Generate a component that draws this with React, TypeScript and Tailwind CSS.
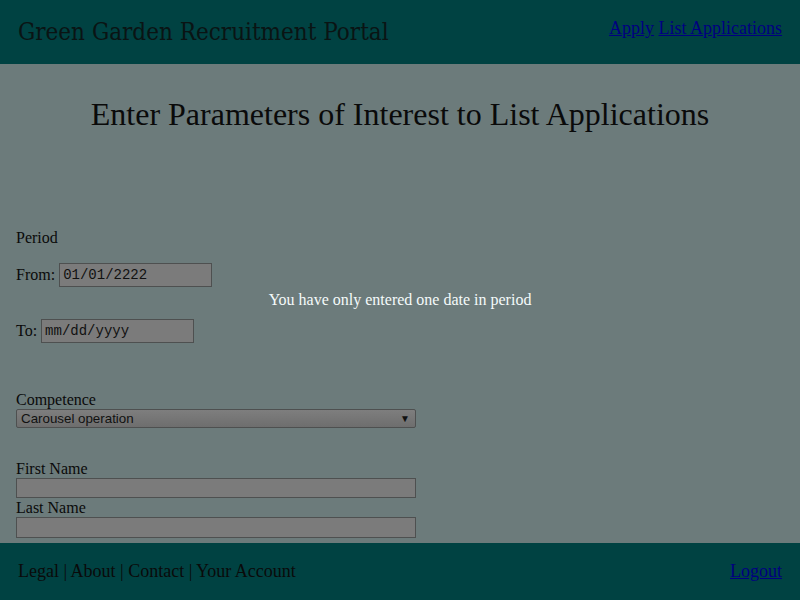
export default function App() {
  return (
    <div className="flex h-[600px] w-[800px] flex-col overflow-hidden bg-[#6c7b7b] font-['Liberation_Serif',serif] text-[#0a0a0a]">
      {/* header */}
      <header className="flex h-[64px] shrink-0 items-start justify-between bg-[#004242] px-[18px]">
        <h1 className="mt-[17px] font-['DejaVu_Serif_Condensed','DejaVu_Serif',serif] text-[24px] leading-[30px] text-[#0a1414]">
          Green Garden Recruitment Portal
        </h1>
        <nav className="mt-[17px] text-[18px] leading-[22px] text-[#000080]">
          <a href="#" className="underline">Apply</a>{" "}
          <a href="#" className="underline">List Applications</a>
        </nav>
      </header>

      <main className="flex-1 px-4 text-[16px]">
        <h2 className="mt-[31px] h-[38px] text-center text-[32px] leading-[38px]">
          Enter Parameters of Interest to List Applications
        </h2>

        <div className="mt-[96px] h-[18px] leading-[18px]">Period</div>

        <div className="mt-[16px] flex h-[24px] items-center">
          <span>From:</span>
          <input
            type="text"
            defaultValue="01/01/2222"
            className="ml-[4px] h-[24px] w-[153px] border border-[#4e5050] bg-[#7b7b7b] px-[3px] font-['Liberation_Mono',monospace] text-[14px] text-[#111] outline-none"
          />
        </div>

        <p className="mt-[4px] h-[18px] text-center leading-[18px] text-[#f4fafa]">
          You have only entered one date in period
        </p>

        <div className="mt-[10px] flex h-[24px] items-center">
          <span>To:</span>
          <input
            type="text"
            placeholder="mm/dd/yyyy"
            className="ml-[4px] h-[24px] w-[153px] border border-[#4e5050] bg-[#7b7b7b] px-[3px] font-['Liberation_Mono',monospace] text-[14px] text-[#111] outline-none placeholder:text-[#111]"
          />
        </div>

        <div className="mt-[48px] h-[18px] leading-[18px]">Competence</div>
        <div className="flex h-[19px] w-[400px] items-center justify-between rounded-[2px] border border-[#4e5050] bg-gradient-to-b from-[#7e7e7e] to-[#6e6e6e] pl-[4px] pr-[5px] font-['Liberation_Sans',sans-serif] text-[13.33px] text-[#111]">
          <span>Carousel operation</span>
          <span className="text-[10px] leading-none">▼</span>
        </div>

        <div className="mt-[32px] h-[18px] leading-[18px]">First Name</div>
        <input
          type="text"
          className="block h-[20px] w-[400px] border border-[#4e5050] bg-[#7b7b7b] outline-none"
        />
        <div className="mt-[1px] h-[18px] leading-[18px]">Last Name</div>
        <input
          type="text"
          className="block h-[21px] w-[400px] border border-[#4e5050] bg-[#7b7b7b] outline-none"
        />
      </main>

      {/* footer */}
      <footer className="flex h-[57px] shrink-0 items-start justify-between bg-[#004242] px-[18px] pt-[17px] text-[18px] leading-[22px]">
        <span>Legal | About | Contact | Your Account</span>
        <a href="#" className="text-[#000080] underline">Logout</a>
      </footer>
    </div>
  );
}
